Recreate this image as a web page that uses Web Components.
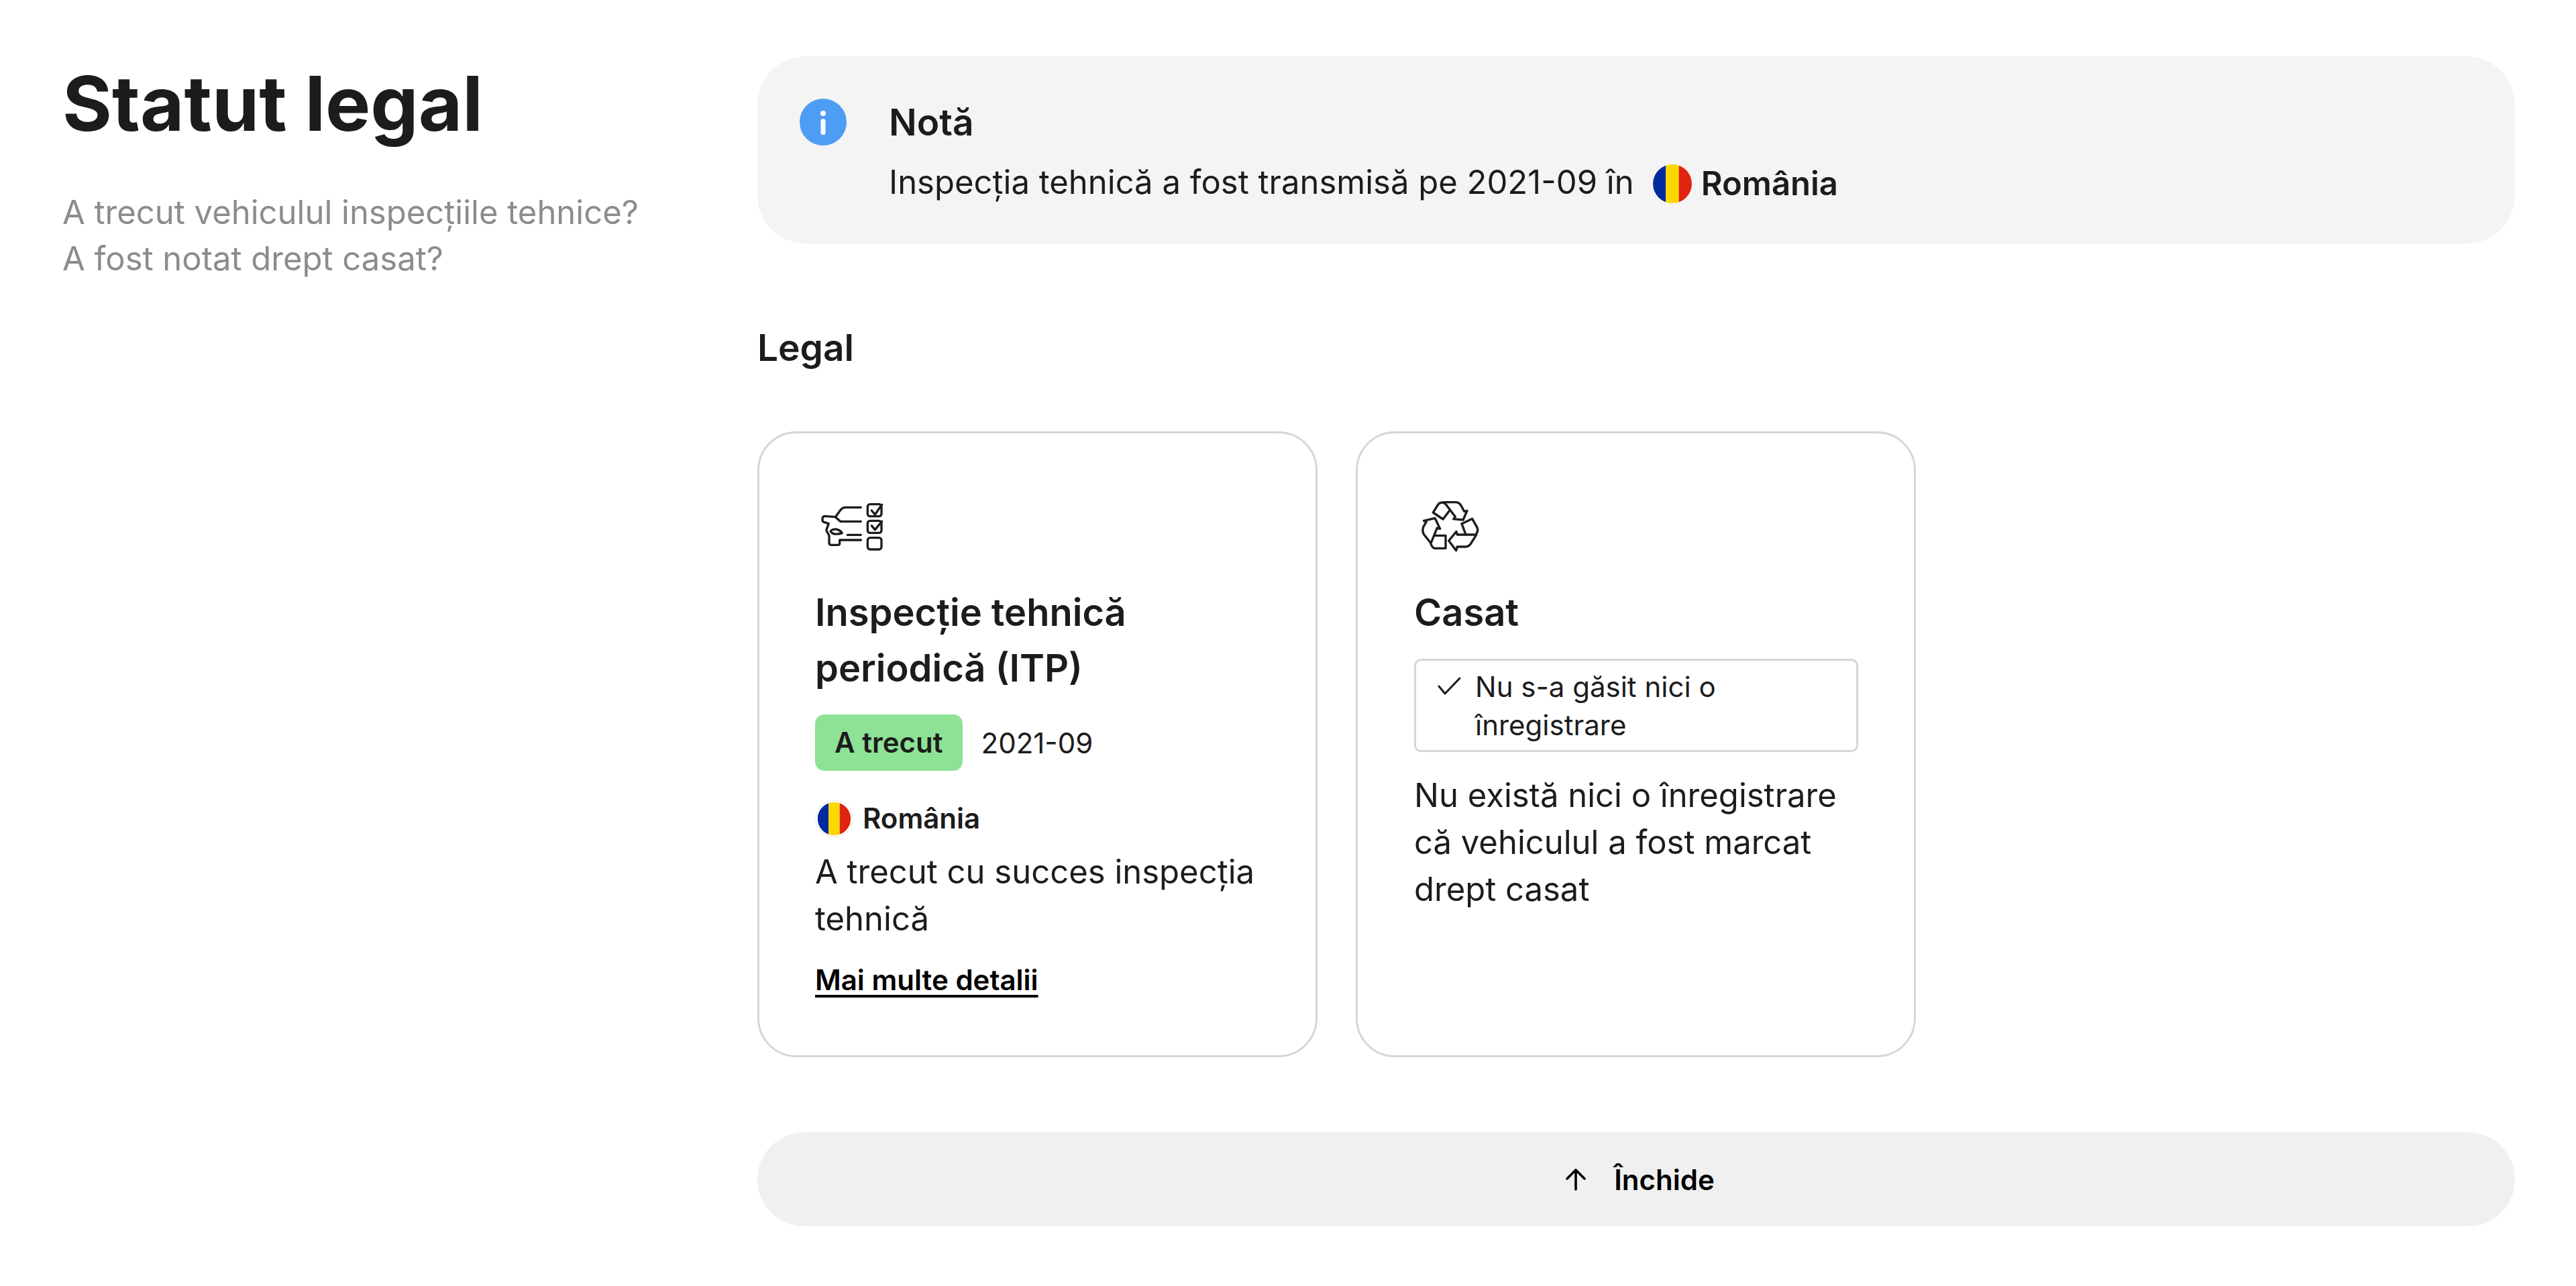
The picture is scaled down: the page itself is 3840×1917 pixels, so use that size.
<!DOCTYPE html>
<html lang="ro">
<head>
<meta charset="utf-8">
<title>Statut legal</title>
<style>
  html, body { margin: 0; background: #fff; }
  body { font-family: Inter, "Liberation Sans", sans-serif; color: #1c1c1c; }
</style>
</head>
<body>
<legal-page>
  <page-intro slot="side" heading="Statut legal">
    A trecut vehiculul inspecțiile tehnice?<br>A fost notat drept casat?
  </page-intro>
  <note-box heading="Notă">Inspecția tehnică a fost transmisă pe 2021-09 în<flag-label big>România</flag-label></note-box>
  <section-title>Legal</section-title>
  <card-row>
    <info-card heading="Inspecție tehnică periodică (ITP)" icon="car">
      <div style="display:flex;align-items:center;gap:28px;margin-bottom:41px">
        <status-pill>A trecut</status-pill>
        <span style="font-size:42px">2021-09</span>
      </div>
      <flag-label>România</flag-label>
      <div style="font-size:49px;line-height:70px;margin-top:15px">A trecut cu succes inspecția tehnică</div>
      <more-link>Mai multe detalii</more-link>
    </info-card>
    <info-card heading="Casat" icon="recycle">
      <check-box>Nu s-a găsit nici o înregistrare</check-box>
      <div style="font-size:49px;line-height:70px;margin-top:30px">Nu există nici o înregistrare că vehiculul a fost marcat drept casat</div>
    </info-card>
  </card-row>
  <close-button>Închide</close-button>
</legal-page>

<script>
let flagCount = 0;
// big flag has no white ring, the small one sits in a ring
const flagSvg = (size, ring) => {
  const id = 'c' + flagCount++;
  const r = ring ? 26 : 30;
  const x = 30 - r;
  const third = (r * 2) / 3;
  return `
  <svg width="${size}" height="${size}" viewBox="0 0 60 60" aria-hidden="true">
    <defs><clipPath id="${id}"><circle cx="30" cy="30" r="${r}"/></clipPath></defs>
    ${ring ? '<circle cx="30" cy="30" r="29.5" fill="#eee"/><circle cx="30" cy="30" r="28" fill="#fff"/>' : ''}
    <g clip-path="url(#${id})">
      <rect x="${x}" y="0" width="${third}" height="60" fill="#002b9f"/>
      <rect x="${x + third}" y="0" width="${third}" height="60" fill="#fdd800"/>
      <rect x="${x + third * 2}" y="0" width="${third}" height="60" fill="#e0230f"/>
    </g>
  </svg>`;
};

const icons = {
  car: `
    <path d="M250 82H182Q168 82 160 92L136 125L158 145H250"/>
    <path d="M136 125L88 121Q78 122 78 134V141Q79 147 88 149L106 155L96 182Q95 188 100 194L108 208V240Q108 250 118 250H148Q155 250 155 242V228H250"/>
    <path d="M114 189Q122 178 140 180Q158 184 166 197Q150 203 132 201Q120 199 114 189Z"/>
    <path d="M190 205H250"/>
    <rect x="280" y="68" width="62" height="54" rx="11"/>
    <rect x="280" y="142" width="62" height="54" rx="11"/>
    <rect x="280" y="218" width="62" height="52" rx="11"/>
    <path d="M298 96L313 114L344 70"/>
    <path d="M298 164L313 182L344 145"/>`,
  recycle: `
    <path d="M190 59H245Q258 60 266 72L281 100L294 97L276 138L233 134L241 124L200 70Q195 62 185 60Q172 60 165 68L142 105L186 135L214 98"/>
    <path d="M100 142L150 130L173 178L160 174L132 242L101 203Q92 188 98 170L112 146Z"/>
    <path d="M147 208H198V265H150Q138 263 132 245"/>
    <path d="M270 155L317 133L339 172Q346 188 332 204H250L246 190L212 231L245 275L250 258H285Q300 258 310 245L335 205"/>
    <path d="M270 155L288 204"/>`
};

class LegalPage extends HTMLElement {
  constructor() {
    super();
    this.attachShadow({ mode: 'open' });
    this.shadowRoot.innerHTML = `
      <style>
        :host { display: flex; width: 3840px; height: 1917px; box-sizing: border-box; padding: 84px 91px 0 93px; overflow: hidden; }
        .side { width: 1036px; flex: none; }
        .main { flex: 1; min-width: 0; }
      </style>
      <div class="side"><slot name="side"></slot></div>
      <div class="main"><slot></slot></div>
    `;
  }
}

class PageIntro extends HTMLElement {
  constructor() {
    super();
    this.attachShadow({ mode: 'open' });
    this.shadowRoot.innerHTML = `
      <style>
        :host { display: block; }
        h1 { margin: 1px 0 0; font-size: 113px; line-height: 138px; font-weight: 700; color: #1c1c1c; }
        p { margin: 59px 0 0; font-size: 49px; line-height: 69px; color: #8c8c8c; }
      </style>
      <h1></h1>
      <p><slot></slot></p>
    `;
    this.shadowRoot.querySelector('h1').textContent = this.getAttribute('heading');
  }
}

class NoteBox extends HTMLElement {
  constructor() {
    super();
    this.attachShadow({ mode: 'open' });
    this.shadowRoot.innerHTML = `
      <style>
        :host { display: flex; box-sizing: border-box; height: 279px; padding: 62px 0 0 63px; gap: 63px; background: #f4f4f4; border-radius: 72px; }
        svg { flex: none; margin-top: 1px; }
        .title { font-size: 55px; line-height: 72px; font-weight: 600; }
        .text { font-size: 49px; line-height: 70px; margin-top: 19px; }
      </style>
      <svg width="70" height="70" viewBox="0 0 70 70" aria-hidden="true">
        <circle cx="35" cy="35" r="35" fill="#4d9df5"/>
        <circle cx="35" cy="22" r="4" fill="#fff"/>
        <rect x="31.5" y="30" width="7" height="24" rx="3.5" fill="#fff"/>
      </svg>
      <div>
        <div class="title"></div>
        <div class="text"><slot></slot></div>
      </div>
    `;
    this.shadowRoot.querySelector('.title').textContent = this.getAttribute('heading');
  }
}

class FlagLabel extends HTMLElement {
  constructor() {
    super();
    this.attachShadow({ mode: 'open' });
    const big = this.hasAttribute('big');
    this.shadowRoot.innerHTML = `
      <style>
        :host { display: inline-flex; align-items: center; gap: ${big ? 14 : 14}px; font-weight: 600; font-size: ${big ? 49 : 42}px; line-height: ${big ? 70 : 60}px; margin-left: ${big ? 28 : 0}px; vertical-align: middle; position: relative; top: ${big ? -2 : 0}px; }
        svg { flex: none; }
      </style>
      ${flagSvg(big ? 58 : 57, !big)}
      <slot></slot>
    `;
  }
}

class SectionTitle extends HTMLElement {
  constructor() {
    super();
    this.attachShadow({ mode: 'open' });
    this.shadowRoot.innerHTML = `
      <style>:host { display: block; font-size: 55px; line-height: 72px; font-weight: 600; margin: 119px 0 89px; }</style>
      <slot></slot>
    `;
  }
}

class CardRow extends HTMLElement {
  constructor() {
    super();
    this.attachShadow({ mode: 'open' });
    this.shadowRoot.innerHTML = `
      <style>:host { display: flex; gap: 57px; }</style>
      <slot></slot>
    `;
  }
}

class InfoCard extends HTMLElement {
  constructor() {
    super();
    this.attachShadow({ mode: 'open' });
    const recycle = this.getAttribute('icon') === 'recycle';
    this.shadowRoot.innerHTML = `
      <style>
        :host { display: block; box-sizing: border-box; width: 835px; height: 933px; padding: 84px 84px 0 ${recycle ? 84 : 83}px; border: 3px solid #d6d6d6; border-radius: 58px; }
        svg { display: block; margin: -1px 0 0 ${recycle ? -19 : -15}px; fill: none; stroke: #1c1c1c; stroke-width: 10; stroke-linejoin: round; stroke-linecap: round; }
        h3 { margin: 33px 0 27px; font-size: 56px; line-height: 83px; font-weight: 600; }
      </style>
      <svg width="140" height="110" viewBox="0 0 420 330" aria-hidden="true">${icons[this.getAttribute('icon')]}</svg>
      <h3></h3>
      <slot></slot>
    `;
    this.shadowRoot.querySelector('h3').textContent = this.getAttribute('heading');
  }
}

class StatusPill extends HTMLElement {
  constructor() {
    super();
    this.attachShadow({ mode: 'open' });
    this.shadowRoot.innerHTML = `
      <style>:host { display: block; padding: 0 29px; height: 84px; line-height: 84px; font-size: 42px; font-weight: 600; background: #8ee296; border-radius: 14px; }</style>
      <slot></slot>
    `;
  }
}

class MoreLink extends HTMLElement {
  constructor() {
    super();
    this.attachShadow({ mode: 'open' });
    this.shadowRoot.innerHTML = `
      <style>
        :host { display: block; margin-top: 26px; }
        a { font-size: 42px; line-height: 60px; font-weight: 600; color: #000; text-decoration: underline; text-decoration-thickness: 4px; text-underline-offset: 7px; }
      </style>
      <a href="#"><slot></slot></a>
    `;
  }
}

class CheckBox extends HTMLElement {
  constructor() {
    super();
    this.attachShadow({ mode: 'open' });
    this.shadowRoot.innerHTML = `
      <style>
        :host { display: flex; box-sizing: border-box; width: 662px; height: 139px; padding: 11px 90px 0 32px; gap: 20px; border: 3px solid #d6d6d6; border-radius: 10px; font-size: 42px; line-height: 56.5px; }
        svg { flex: none; margin-top: 13px; fill: none; stroke: #1c1c1c; stroke-width: 3; stroke-linecap: round; stroke-linejoin: round; }
      </style>
      <svg width="36" height="28" viewBox="0 0 36 28" aria-hidden="true"><path d="M2 14L11 25L33 2"/></svg>
      <div><slot></slot></div>
    `;
  }
}

class CloseButton extends HTMLElement {
  constructor() {
    super();
    this.attachShadow({ mode: 'open' });
    this.shadowRoot.innerHTML = `
      <style>
        :host { display: flex; align-items: center; justify-content: center; gap: 42px; height: 140px; margin-top: 112px; padding-left: 12px; background: #f0f0f0; border-radius: 70px; font-size: 42px; font-weight: 600; color: #000; }
        svg { flex: none; fill: none; stroke: #000; stroke-width: 3.6; stroke-linecap: round; stroke-linejoin: round; }
      </style>
      <svg width="30" height="34" viewBox="0 0 30 34" aria-hidden="true"><path d="M15 32V3M2 16L15 3L28 16"/></svg>
      <slot></slot>
    `;
  }
}

customElements.define('legal-page', LegalPage);
customElements.define('page-intro', PageIntro);
customElements.define('note-box', NoteBox);
customElements.define('flag-label', FlagLabel);
customElements.define('section-title', SectionTitle);
customElements.define('card-row', CardRow);
customElements.define('info-card', InfoCard);
customElements.define('status-pill', StatusPill);
customElements.define('more-link', MoreLink);
customElements.define('check-box', CheckBox);
customElements.define('close-button', CloseButton);
</script>
</body>
</html>
